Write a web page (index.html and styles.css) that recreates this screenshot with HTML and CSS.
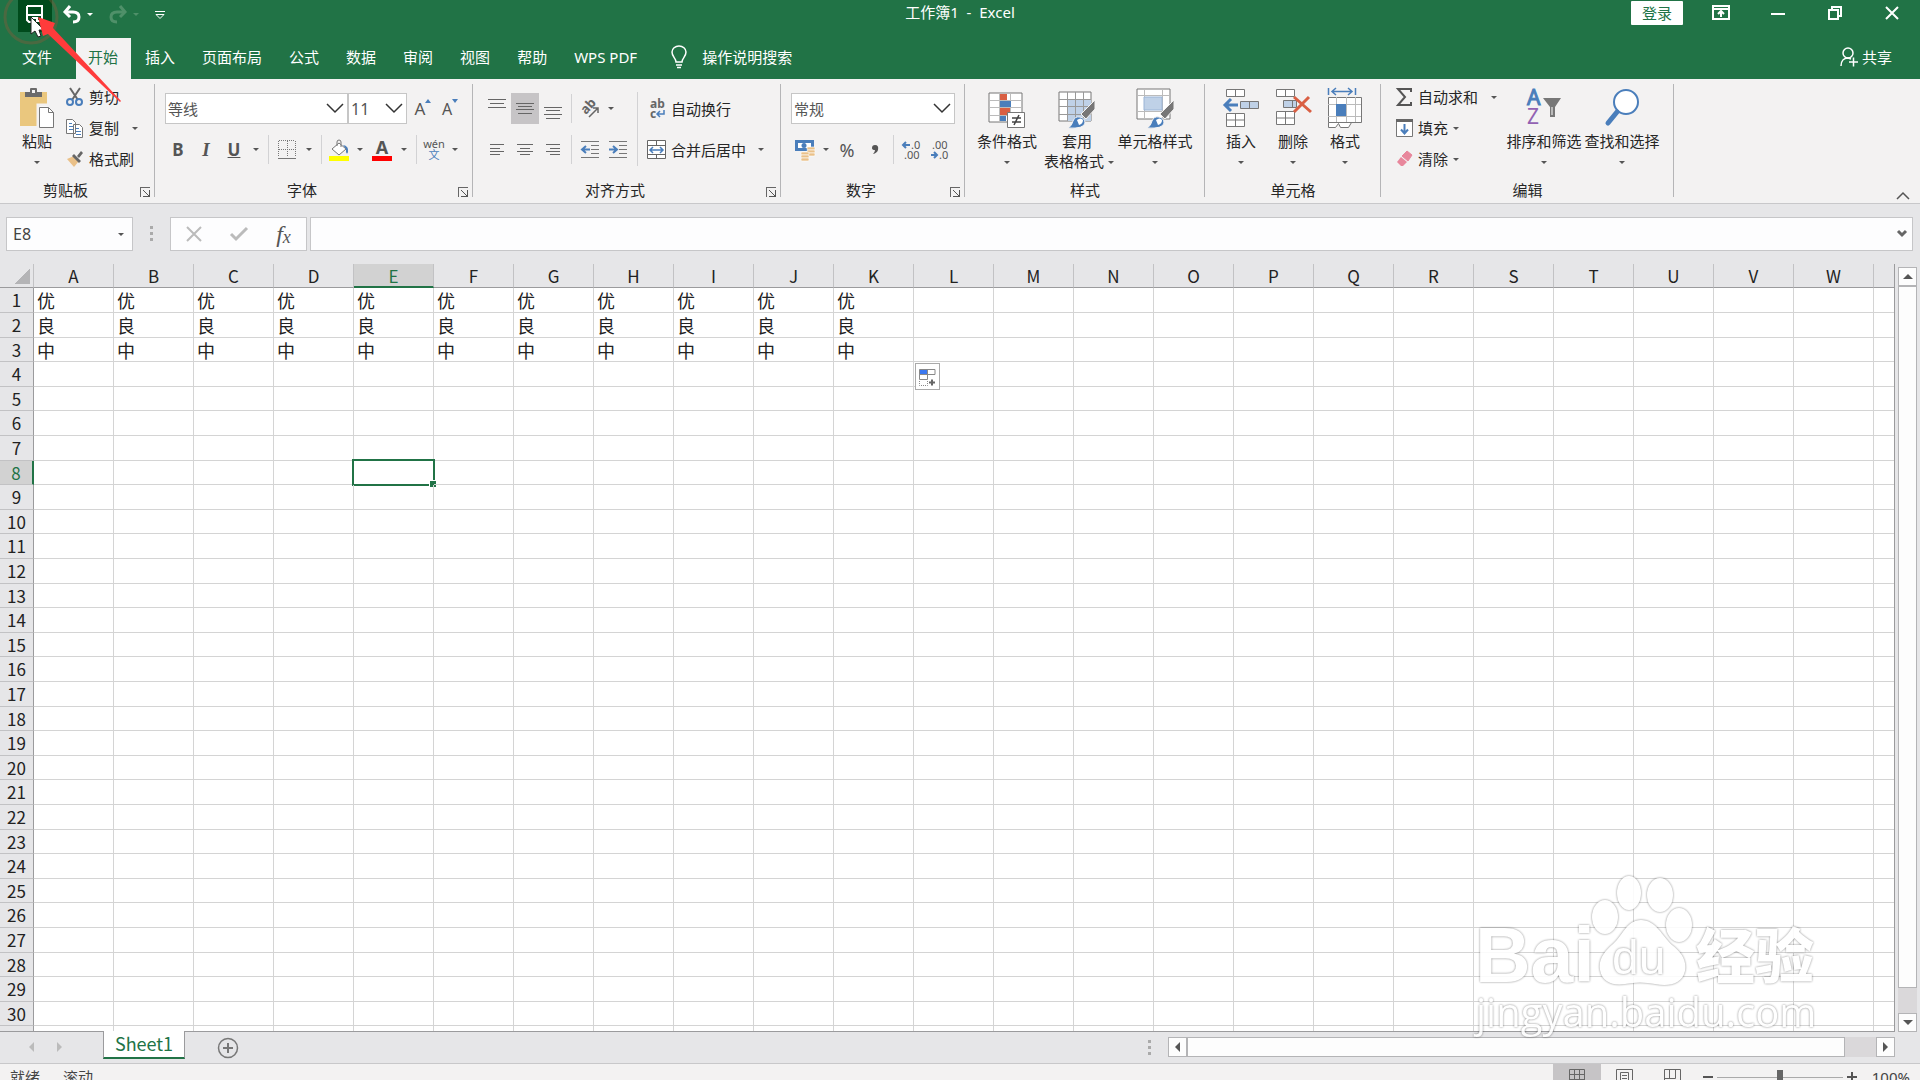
FILE: index.html
```html
<!DOCTYPE html>
<html lang="zh">
<head>
    <meta charset="UTF-8">
    <title>工作簿1 - Excel</title>
    <meta name="viewport" content="width=device-width, initial-scale=1.0">
    <link rel="stylesheet" href="styles.css">
</head>
<body>
<!-- 标题栏 -->
<header class="titlebar">
    <div class="quick">
        <button class="save" aria-label="保存">
            <svg width="18" height="20" fill="none" stroke="#fff" stroke-width="2"><path d="M1 2h15v15h-4M1 2v14l2 2h2M1 11h15"/><path d="M7 18v-4h4v4"/></svg>
        </button>
        <button class="undo" aria-label="撤销">
            <svg width="20" height="20" fill="none" stroke="#fff" stroke-width="3"><path d="M3 8h8c4 0 6 2 6 5s-2 5-6 5"/><path d="M8 2L3 8l5 5"/></svg>
        </button>
        <button class="drop light" aria-label="撤销列表"></button>
        <button class="redo" aria-label="恢复">
            <svg width="20" height="20" fill="none" stroke="#4f9069" stroke-width="3"><path d="M17 8H9c-4 0-6 2-6 5s2 5 6 5"/><path d="M12 2l5 6-5 5"/></svg>
        </button>
        <button class="drop faded" aria-label="恢复列表"></button>
        <button class="custom" aria-label="自定义快速访问工具栏">
            <svg width="12" height="10" fill="none" stroke="#fff"><path d="M1 1.500h10M2 4.500h8l-4 4z"/></svg>
        </button>
    </div>
    <h1>工作簿1&nbsp; -&nbsp; Excel</h1>
    <div class="window-tools">
        <button class="login">登录</button>
        <button aria-label="功能区显示选项"><svg width="18" height="16" fill="none" stroke="#fff" stroke-width="2"><path d="M1 1h16v13H1zM1 4h16M9 12V7M6 9l3-3 3 3" /></svg></button>
        <button aria-label="最小化"><svg width="14" height="14" stroke="#fff" stroke-width="2"><path d="M0 8h14"/></svg></button>
        <button aria-label="还原"><svg width="14" height="14" fill="none" stroke="#fff" stroke-width="2"><path d="M1 4h9v9H1zM4 4V1h9v9h-3"/></svg></button>
        <button aria-label="关闭"><svg width="14" height="14" stroke="#fff" stroke-width="2"><path d="M1 1l12 12M13 1L1 13"/></svg></button>
    </div>
</header>

<!-- 选项卡 -->
<nav class="tabs">
    <a href="#" class="file">文件</a>
    <a href="#" class="active">开始</a>
    <a href="#">插入</a>
    <a href="#">页面布局</a>
    <a href="#">公式</a>
    <a href="#">数据</a>
    <a href="#">审阅</a>
    <a href="#">视图</a>
    <a href="#">帮助</a>
    <a href="#">WPS PDF</a>
    <a href="#" class="tell">
        <svg width="16" height="24" fill="none" stroke="#fff" stroke-width="1.500"><path d="M5 17c0-4-4-5-4-10a7 6 0 0 1 14 0c0 5-4 6-4 10zM5 20h6M6 22.500h4"/></svg>
        操作说明搜索
    </a>
    <a href="#" class="share">
        <svg width="18" height="20" fill="none" stroke="#fff" stroke-width="1.500"><circle cx="8" cy="6" r="5"/><path d="M1 19c0-5 3-8 7-8l3 1M9 15h9M13.500 10.500v9"/></svg>
        共享
    </a>
</nav>

<!-- 功能区 -->
<section class="ribbon">
    <div class="group clipboard">
        <div class="body">
            <button class="big">
                <svg width="36" height="42"><path d="M1 5h27v34H1z" fill="#eac77e"/><path d="M6 10V5h5V2q0-1 1-1h5q1 0 1 1v3h5v5z" fill="#6b6b6b"/><path d="M13 3h3v3h-3z" fill="#f3f2f2"/><path d="M19 18h10l6 6v17H19z" fill="#fff" stroke="#f3f2f2" stroke-width="3"/><path d="M20.500 20.500h9l5 5v15h-14zM29.500 20.500v5h5" fill="#fff" stroke="#777"/></svg>
                <span>粘贴</span><i class="caret"></i>
            </button>
            <div class="stack">
                <button><svg width="18" height="20" fill="none" stroke-width="2"><path d="M4 1l8 12M14 1L6 13" stroke="#666"/><circle cx="4" cy="15" r="3" stroke="#4a7ebb"/><circle cx="13" cy="15" r="3" stroke="#4a7ebb"/></svg>剪切</button>
                <button><svg width="18" height="20" fill="#fff" stroke="#777"><path d="M.5 1.500h6l3 3v11h-9zM7.500 6.500h6l3 3v10h-9z"/><path d="M3 5.500h3M3 8.500h4M3 11.500h4M10 10.500h3M10 13.500h5M10 16.500h5" stroke="#4a7ebb"/></svg>复制<i class="caret gap"></i></button>
                <button><svg width="18" height="18"><path d="M1 9l7-3 5 5-5 6z" fill="#eac189"/><path d="M8 4l7 7-2 2-7-7zM11 6l4-5 2 2-4 5z" fill="#666"/></svg>格式刷</button>
            </div>
        </div>
        <div class="caption"><span>剪贴板</span><button class="launch" aria-label="剪贴板设置"></button></div>
    </div>

    <div class="group font">
        <div class="body rows">
            <div class="row">
                <select class="family" aria-label="字体"><option>等线</option></select>
                <select class="size" aria-label="字号"><option>11</option></select>
                <button class="ic grow">A<svg width="6" height="4"><path d="M0 4l3-4 3 4z" fill="#4a7ebb"/></svg></button>
                <button class="ic grow small">A<svg width="6" height="4"><path d="M0 0l3 4 3-4z" fill="#4a7ebb"/></svg></button>
            </div>
            <div class="row">
                <button class="ic bold">B</button>
                <button class="ic italic">I</button>
                <button class="ic under">U</button>
                <button class="drop" aria-label="下划线"></button>
                <hr>
                <button class="ic" aria-label="边框"><svg width="18" height="20" fill="none" stroke="#777"><path d="M1 .5h16M.5 1v16M17.500 1v16M9.500 1v16M1 9.500h16" stroke-dasharray="1 1"/><path d="M0 18.500h18"/></svg></button>
                <button class="drop" aria-label="边框列表"></button>
                <hr>
                <button class="ic slim" aria-label="填充颜色"><svg width="20" height="22"><path d="M10 4l7 6-7 6-7-6z" fill="#fff" stroke="#777"/><path d="M8 7V3q0-2 2-2t2 2v5" fill="none" stroke="#777"/><path d="M14 6q6 1 5 7-1 3-2 0v-3z" fill="#4a7ebb"/><path d="M0 17h20v5H0z" fill="#ff0"/></svg></button>
                <button class="drop" aria-label="填充颜色列表"></button>
                <button class="ic fontcolor">A</button>
                <button class="drop" aria-label="字体颜色列表"></button>
                <hr>
                <button class="ic slim pinyin"><span>wén</span><b>文</b></button>
                <button class="drop" aria-label="拼音列表"></button>
            </div>
        </div>
        <div class="caption"><span>字体</span><button class="launch" aria-label="字体设置"></button></div>
    </div>

    <div class="group align">
        <div class="body">
            <div class="rows">
                <div class="row">
                    <button class="ic" aria-label="顶端对齐"><svg width="18" height="22" stroke="#666"><path d="M0 1.500h18M2 5.500h14M0 9.500h18"/></svg></button>
                    <button class="ic on" aria-label="垂直居中"><svg width="18" height="22" stroke="#666"><path d="M0 5.500h18M2 8.500h14M0 11.500h18M2 15.500h14"/></svg></button>
                    <button class="ic" aria-label="底端对齐"><svg width="18" height="22" stroke="#666"><path d="M0 9.500h18M2 12.500h14M0 16.500h18M2 20.500h14"/></svg></button>
                    <hr>
                    <button class="ic" aria-label="方向"><svg width="20" height="20"><text transform="translate(6 16) rotate(-48)" font-size="13" font-weight="bold" fill="#666">ab</text><path d="M9 18l9-9M13 9h5v5" fill="none" stroke="#666" stroke-width="1.500"/></svg></button>
                    <button class="drop near" aria-label="方向列表"></button>
                </div>
                <div class="row">
                    <button class="ic" aria-label="左对齐"><svg width="14" height="12" stroke="#666"><path d="M0 .5h14M0 4.500h10M0 7.500h14M0 10.500h10"/></svg></button>
                    <button class="ic" aria-label="居中"><svg width="16" height="12" stroke="#666"><path d="M0 .5h16M3 4.500h10M0 7.500h16M3 10.500h10"/></svg></button>
                    <button class="ic" aria-label="右对齐"><svg width="14" height="12" stroke="#666"><path d="M0 .5h14M4 4.500h10M0 7.500h14M4 10.500h10"/></svg></button>
                    <hr>
                    <button class="ic" aria-label="减少缩进"><svg width="18" height="18" fill="none" stroke="#777"><path d="M0 .5h18M10 4.500h8M10 8.500h8M10 12.500h8M0 16.500h18"/><path d="M9 8.500H2M5 5L1 8.500 5 12" stroke="#4a7ebb" stroke-width="2"/></svg></button>
                    <button class="ic" aria-label="增加缩进"><svg width="18" height="18" fill="none" stroke="#777"><path d="M0 .5h18M10 4.500h8M10 8.500h8M10 12.500h8M0 16.500h18"/><path d="M0 8.500h7M4 5l4 3.500L4 12" stroke="#4a7ebb" stroke-width="2"/></svg></button>
                </div>
            </div>
            <hr class="tall">
            <div class="rows">
                <button class="row label"><svg width="20" height="20" font-size="12" font-weight="bold" fill="#666"><text x="3" y="9">ab</text><text x="3" y="19">c</text><path d="M17 11v4h-6M13 12l-3 3 3 3" fill="none" stroke="#4a7ebb" stroke-width="1.500"/></svg>自动换行</button>
                <button class="row label"><svg width="20" height="20" fill="#fff" stroke="#666"><path d="M.5.5h18v18H.5zM.5 5.500h18M.5 14.500h18M9.500.5v5M9.500 14.500v4"/><path d="M3 10h13M6 7l-3 3 3 3M13 7l3 3-3 3" fill="none" stroke="#4a7ebb" stroke-width="1.500"/></svg>合并后居中<i class="caret gap"></i></button>
            </div>
        </div>
        <div class="caption"><span>对齐方式</span><button class="launch" aria-label="对齐设置"></button></div>
    </div>

    <div class="group number">
        <div class="body rows">
            <div class="row">
                <select class="format" aria-label="数字格式"><option>常规</option></select>
            </div>
            <div class="row">
                <button class="ic" aria-label="会计数字格式"><svg width="20" height="22"><path d="M0 1h19v11H0z" fill="#4a7ebb"/><path d="M3 4h13v5H3z" fill="#fff"/><circle cx="9" cy="6.500" r="2.500" fill="#4a7ebb"/><g fill="#eac189" stroke="#fff" stroke-width=".6"><rect x="12" y="8" width="8" height="3" rx="1"/><rect x="12" y="11" width="8" height="3" rx="1"/><rect x="12" y="14" width="8" height="3" rx="1"/><rect x="6" y="13" width="8" height="3" rx="1"/><rect x="6" y="16" width="8" height="3" rx="1"/><rect x="6" y="19" width="8" height="3" rx="1"/></g></svg></button>
                <button class="drop near" aria-label="会计格式列表"></button>
                <button class="ic percent">%</button>
                <button class="ic" aria-label="千位分隔样式"><svg width="8" height="12"><path d="M4 1q4 0 3 5-1 3-5 4 2-2 2-4-3 0-3-2 0-3 3-3z" fill="#555"/></svg></button>
                <hr>
                <button class="ic" aria-label="增加小数位数"><svg width="18" height="20" font-size="11" fill="#555"><text x="8" y="9">.0</text><text x="1" y="19">.00</text><path d="M7 5H1M3 2L0 5l3 3" fill="none" stroke="#4a7ebb" stroke-width="2"/></svg></button>
                <button class="ic" aria-label="减少小数位数"><svg width="18" height="20" font-size="11" fill="#555"><text x="1" y="9">.00</text><text x="8" y="19">.0</text><path d="M0 15h6M3 12l3 3-3 3" fill="none" stroke="#4a7ebb" stroke-width="2"/></svg></button>
            </div>
        </div>
        <div class="caption"><span>数字</span><button class="launch" aria-label="数字设置"></button></div>
    </div>

    <div class="group styles">
        <div class="body">
            <button class="big">
                <svg width="38" height="42"><path d="M1 6h33v29H1z" fill="#fff" stroke="#777"/><path d="M1 13.500h33M1 20.500h33M1 28.500h33M11.500 6v29M22.500 6v29" stroke="#bbb"/><path d="M12 7h7v6h-7zM12 21h10v7H12z" fill="#d95f43"/><path d="M12 14h11v6H12zM12 29h6v5h-6z" fill="#4a7ebb"/><path d="M19.500 25.500h17v15h-17z" fill="#fff" stroke="#777"/><path d="M24 31h9M24 35h9M31 28l-5 10" stroke="#444" stroke-width="1.500"/></svg>
                <span>条件格式</span><i class="caret"></i>
            </button>
            <button class="big mid">
                <svg width="38" height="42"><path d="M1 5h32v29H1z" fill="#fff" stroke="#777"/><path d="M9 13h24v21H9z" fill="#bfd1e7"/><path d="M1 12.500h32M1 19.500h32M1 27.500h32M9.500 5v29M17.500 5v29M25.500 5v29" stroke="#999"/><path d="M37 13v9l-9 10-5-5z" fill="#777" stroke="#f3f2f2"/><path d="M10 41q4-2 5-7 2-5 7-4 5 1 5 6-1 6-17 5z" fill="#4a7ebb" stroke="#f3f2f2"/><path d="M19 33q4-3 6 0 0 4-4 5z" fill="#fff"/></svg>
                <span>套用</span><span class="second">表格格式<i class="caret"></i></span>
            </button>
            <button class="big wide">
                <svg width="38" height="42"><path d="M1 2h33v30H1z" fill="#fff" stroke="#777"/><path d="M1 8.500h33M1 24.500h33M8.500 2v30M26.500 2v30" stroke="#bbb"/><path d="M8 10h18v13H8z" fill="#bfd1e7" stroke="#9ab4d6"/><path d="M38 13v9l-9 10-5-5z" fill="#777" stroke="#f3f2f2"/><path d="M11 41q4-2 5-7 2-5 7-4 5 1 5 6-1 6-17 5z" fill="#4a7ebb" stroke="#f3f2f2"/><path d="M20 33q4-3 6 0 0 4-4 5z" fill="#fff"/></svg>
                <span>单元格样式</span><i class="caret"></i>
            </button>
        </div>
        <div class="caption"><span>样式</span></div>
    </div>

    <div class="group cells">
        <div class="body">
            <button class="big">
                <svg width="36" height="42" fill="#fff" stroke="#777"><path d="M3.500 2.500h18v7h-18zM12.500 2.500v7M3.500 26.500h18v13h-18zM12.500 26.500v13M3.500 33h18"/><path d="M17.500 14.500h18v7h-18zM26.500 14.500v7" fill="#bfd1e7"/><path d="M15 18H3M8 12l-6 6 6 6" fill="none" stroke="#4a7ebb" stroke-width="3"/></svg>
                <span>插入</span><i class="caret"></i>
            </button>
            <button class="big">
                <svg width="36" height="42" fill="#fff" stroke="#777"><path d="M1.500 2.500h18v7h-18zM10.500 2.500v7M1.500 24.500h18v13h-18zM10.500 24.500v13M1.500 31h18"/><path d="M8.500 13.500h13v7h-13zM17.500 13.500v7" fill="#bfd1e7"/><path d="M19 10l17 15M34 10L19 25" fill="none" stroke="#d95f43" stroke-width="3"/></svg>
                <span>删除</span><i class="caret"></i>
            </button>
            <button class="big">
                <svg width="36" height="42" fill="#fff" stroke="#777"><path d="M1.500 10.500h33v25h-33zM1.500 35.500v5h7l3-4 2 4h8l3-5"/><path d="M1 17.500h33M1 29.500h33M9.500 10v25M19.500 10v25M28.500 10v25" stroke="#bbb"/><path d="M9 17h10v12H9z" fill="#4a7ebb" stroke="none"/><path d="M1.500 1v7M28.500 1v7M5 4.500h20M9 1L5 4.500 9 8M21 1l4 3.500L21 8" fill="none" stroke="#4a7ebb" stroke-width="1.500"/></svg>
                <span>格式</span><i class="caret"></i>
            </button>
        </div>
        <div class="caption"><span>单元格</span></div>
    </div>

    <div class="group edit">
        <div class="body">
            <div class="stack">
                <button><svg width="17" height="20" fill="none" stroke="#555" stroke-width="2"><path d="M15 5V2H2l7 8-7 8h13v-3"/></svg>自动求和<i class="caret gap"></i></button>
                <button><svg width="17" height="20"><path d="M.5 1.500h16v17H.5z" fill="#fff" stroke="#777"/><path d="M0 1h17v3H0z" fill="#666"/><path d="M8.500 6v9M5 11.500l3.500 4 3.500-4" fill="none" stroke="#4a7ebb" stroke-width="2"/></svg>填充<i class="caret"></i></button>
                <button><svg width="17" height="20"><path d="M11 2l5 4-4 6-6-5z" fill="#e8879c" stroke="#e8879c"/><path d="M5 8l6 5-4 4H5l-4-4z" fill="#e8879c"/></svg>清除<i class="caret"></i></button>
            </div>
            <button class="big">
                <svg width="36" height="42"><text x="1" y="18" font-size="21" fill="#4a7ebb" stroke="#4a7ebb">A</text><text x="1" y="37" font-size="21" fill="#9262b3">Z</text><path d="M17 11h18l-6 9v10h-5V20z" fill="#777"/><path d="M26 20v8" stroke="#fff"/></svg>
                <span>排序和筛选</span><i class="caret"></i>
            </button>
            <button class="big">
                <svg width="36" height="42" fill="none" stroke="#4a7ebb"><circle cx="22" cy="15" r="12" fill="#fff" stroke-width="2"/><path d="M13 25L4 36" stroke-width="5" stroke-linecap="round"/></svg>
                <span>查找和选择</span><i class="caret"></i>
            </button>
        </div>
        <div class="caption"><span>编辑</span></div>
    </div>

    <button class="collapse" aria-label="折叠功能区"><svg width="14" height="9" fill="none" stroke="#555" stroke-width="1.500"><path d="M1 8l6-6 6 6"/></svg></button>
</section>

<!-- 编辑栏 -->
<section class="formula">
    <div class="namebox"><input type="text" value="E8" aria-label="名称框"><button class="drop" aria-label="名称列表"></button></div>
    <span class="grip"></span>
    <div class="fx">
        <button aria-label="取消"><svg width="16" height="16" stroke="#bbb" stroke-width="2"><path d="M1 1l14 14M15 1L1 15"/></svg></button>
        <button aria-label="输入"><svg width="18" height="16" fill="none" stroke="#bbb" stroke-width="3"><path d="M1 8l5 5L17 2"/></svg></button>
        <button class="fn"><i>f</i><i class="sub">x</i></button>
    </div>
    <div class="inputbar"><input type="text" aria-label="编辑栏"><button aria-label="展开编辑栏"><svg width="10" height="8" fill="none" stroke="#666" stroke-width="3"><path d="M1 1l4 4 4-4"/></svg></button></div>
</section>

<!-- 表格 -->
<main class="sheet">
    <div class="viewport">
        <table id="grid"></table>
    </div>
    <div class="vscroll">
        <button aria-label="向上"><i class="tri up"></i></button>
        <div class="thumb"></div>
        <button aria-label="向下"><i class="tri down"></i></button>
    </div>
    <svg class="watermark" width="350" height="170" aria-label="Baidu 经验">
        <text class="latin" x="0" y="111">Bai</text>
        <g>
            <ellipse cx="130" cy="46" rx="13" ry="17"/>
            <ellipse cx="154" cy="22" rx="12" ry="17"/>
            <ellipse cx="185" cy="24" rx="13" ry="17"/>
            <ellipse cx="204" cy="54" rx="13" ry="17"/>
            <path d="M166 49c-14 0-18 15-28 24-8 7-15 15-13 26 2 12 13 16 25 14 10-2 20-2 30 0 14 3 27 0 30-13 2-11-4-19-13-26-10-9-16-25-31-25z"/>
        </g>
        <text class="du" x="137" y="103">du</text>
        <text class="cn" x="221" y="107">经验</text>
        <text class="url" x="1" y="156">jingyan.baidu.com</text>
    </svg>
</main>

<!-- 工作表标签 -->
<section class="sheets">
    <button class="step" aria-label="上一张"><i class="tri left"></i></button>
    <button class="step" aria-label="下一张"><i class="tri right"></i></button>
    <button class="sheet-tab">Sheet1</button>
    <button class="add" aria-label="新工作表"><svg width="22" height="22" fill="none" stroke="#777"><circle cx="11" cy="11" r="9.500" stroke-width="1.500"/><path d="M6 11h10M11 6v10" stroke-width="2"/></svg></button>
    <span class="grip"></span>
    <div class="hscroll">
        <button aria-label="向左"><i class="tri left"></i></button>
        <div class="thumb"></div>
        <button aria-label="向右"><i class="tri right"></i></button>
    </div>
</section>

<!-- 状态栏 -->
<footer class="status">
    <span>就绪</span><span>滚动</span>
    <div class="views">
        <button class="on" aria-label="普通"><svg width="16" height="16" fill="none" stroke="#666"><path d="M.5.5h15v15H.5zM.5 5.500h15M.5 10.500h15M5.500.5v15M10.500.5v15"/></svg></button>
        <button aria-label="页面布局"><svg width="17" height="16" fill="none" stroke="#666"><path d="M.5.5h16v15H.5zM4.500 3.500h8v12h-8zM6 6.500h5M6 9.500h5M6 12.500h5"/></svg></button>
        <button aria-label="分页预览"><svg width="17" height="16" fill="none" stroke="#666"><path d="M.5.500h16v15M.5.5v15M5.500.5v9M11.500.5v9M.5 9.500h11"/></svg></button>
    </div>
    <button class="zoom-btn" aria-label="缩小"><svg width="10" height="12" stroke="#555" stroke-width="2"><path d="M0 6h10"/></svg></button>
    <input type="range" min="0" max="200" value="100" aria-label="缩放">
    <button class="zoom-btn" aria-label="放大"><svg width="10" height="12" stroke="#555" stroke-width="2"><path d="M0 6h10M5 1v10"/></svg></button>
    <span class="percent">100%</span>
</footer>

<!-- 鼠标与指示箭头 -->
<svg class="pointer" width="130" height="110">
    <circle cx="31" cy="17" r="26" fill="none" stroke="#8a5a3a" stroke-width="3" opacity=".4"/>
    <path d="M31 17v17l4-3 3 6 3-1-2-6h5z" fill="#fff" stroke="#222"/>
    <path d="M38 17l17 6-2 5 68 73-1 1-72-68-5 2z" fill="#ff3b3b"/>
</svg>

<script>
    const grid = document.getElementById('grid');
    const cols = 'ABCDEFGHIJKLMNOPQRSTUVW'.split('');
    const values = ['优', '良', '中'];
    const filled = 11;
    const selected = {col: 'E', row: 8};

    const paste = `<button class="fill-options" aria-label="自动填充选项">
        <svg width="19" height="19" fill="#fff" stroke="#888"><path d="M9 2.500h8v5H9zM1.500 7.500h8v5h-8z"/><path d="M1.500 14v4.500h8V14" stroke-dasharray="1 1"/><path d="M1.500 2.500h8v5h-8z" fill="#3b78f0"/><path d="M11 15.500h6M14 12.500v6" stroke="#666" stroke-width="2"/></svg>
    </button>`;

    let html = '<thead><tr><th class="corner"></th>';
    html += cols.map(c => `<th class="${c === selected.col ? 'on' : ''}">${c}</th>`).join('');
    html += '<th class="rest"></th></tr></thead><tbody>';
    for (let r = 1; r <= 31; r++) {
        html += `<tr><th class="${r === selected.row ? 'on' : ''}">${r}</th>`;
        cols.forEach((c, i) => {
            let text = r <= values.length && i < filled ? values[r - 1] : '';
            if (c === 'L' && r === 4) text = paste;
            html += `<td class="${c === selected.col && r === selected.row ? 'selected' : ''}">${text}</td>`;
        });
        html += '<td></td></tr>';
    }
    grid.innerHTML = html + '</tbody>';
</script>
</body>
</html>
```
FILE: styles.css
```css
* {
    box-sizing: border-box;
}

body {
    margin: 0;
    height: 100vh;
    display: flex;
    flex-direction: column;
    overflow: hidden;
    background: #e6e6e8;
    color: #262626;
    font: 15px/20px "Noto Sans", "Noto Sans CJK SC", sans-serif;
}

button, input, select {
    font: inherit;
    color: inherit;
    border: 0;
    padding: 0;
    margin: 0;
    background: none;
    border-radius: 0;
}

button {
    display: flex;
    align-items: center;
    justify-content: center;
}

input:focus {
    outline: none;
}

svg {
    flex: none;
    overflow: visible;
}

a {
    color: inherit;
    text-decoration: none;
}

/* 标题栏 */
.titlebar {
    height: 38px;
    background: #217346;
    color: white;
    display: grid;
    grid-template-columns: 1fr auto 1fr;
    align-items: start;
}

.titlebar h1 {
    margin: 0;
    font-size: 15px;
    font-weight: normal;
    line-height: 24px;
}

.quick {
    display: flex;
    align-items: center;
    padding-left: 18px;
}

.quick button {
    height: 32px;
}

.quick .save {
    width: 34px;
    background: #004b1c;
    padding-bottom: 4px;
}

.quick .undo,
.quick .redo {
    width: 20px;
    margin-left: 10px;
    padding-bottom: 4px;
}

.quick .custom {
    margin-left: 10px;
    padding-bottom: 2px;
}

.drop {
    width: 16px;
    height: 31px;
}

.drop.near {
    width: 14px;
}

.quick .drop {
    padding-bottom: 4px;
}

.drop::before,
.caret {
    content: "";
    flex: none;
    border: 3px solid transparent;
    border-top-color: #555;
    border-bottom: 0;
}

.light::before {
    border-top-color: white;
}

.faded::before {
    border-top-color: #4f9069;
}

.window-tools {
    display: flex;
    justify-content: flex-end;
    align-items: center;
}

.window-tools button {
    width: 57px;
    height: 26px;
    padding-bottom: 1px;
}

.window-tools .login {
    width: 52px;
    height: 24px;
    margin-right: 9px;
    background: white;
    color: #217346;
    border-radius: 1px;
}

/* 选项卡 */
.tabs {
    height: 41px;
    background: #217346;
    color: white;
    display: flex;
}

.tabs a {
    display: flex;
    align-items: center;
    padding: 0 13px 4px 14px;
    white-space: nowrap;
}

.tabs .file {
    padding-left: 22px;
    padding-right: 22px;
}

.tabs .active {
    margin-left: 2px;
    padding-left: 12px;
    background: #f3f2f2;
    color: #217346;
}

.tabs .tell {
    gap: 15px;
    padding-left: 21px;
}

.tabs .share {
    margin-left: auto;
    gap: 4px;
    padding-right: 28px;
}

/* 功能区 */
.ribbon {
    height: 125px;
    background: #f3f2f2;
    border-bottom: 1px solid #c8c8ca;
    display: flex;
    padding-top: 3px;
}

.group {
    display: flex;
    flex-direction: column;
    flex: none;
    background: linear-gradient(#b5b5b7, #b5b5b7) no-repeat right 2px / 1px 113px;
}

.clipboard {
    width: 155px;
}

.font {
    width: 318px;
}

.align {
    width: 308px;
}

.number {
    width: 184px;
}

.styles {
    width: 240px;
}

.cells {
    width: 176px;
}

.edit {
    width: 293px;
}

.body {
    display: flex;
    flex: 1;
    padding-left: 10px;
}

.clipboard .body,
.font .body,
.styles .body {
    padding-left: 8px;
}

.edit .body {
    padding-left: 15px;
}

.rows {
    display: flex;
    flex-direction: column;
    gap: 10px;
    padding-top: 11px;
}

.row {
    display: flex;
    align-items: center;
    height: 31px;
}

.caption {
    height: 26px;
    display: flex;
    align-items: center;
}

.caption span {
    flex: 1;
    text-align: center;
}

.launch {
    position: relative;
    width: 10px;
    height: 10px;
    margin: 3px 5px 0 9px;
    border-top: 1px solid #666;
    border-left: 1px solid #666;
}

.launch::after {
    content: "";
    position: absolute;
    right: 0;
    bottom: 0;
    width: 6px;
    height: 6px;
    border-right: 1px solid #555;
    border-bottom: 1px solid #555;
    background: linear-gradient(to top right, transparent 42%, #555 42%, #555 58%, transparent 58%);
}

hr {
    width: 1px;
    height: 29px;
    margin: 0 4px;
    border: 0;
    background: #d2d2d4;
}

hr.tall {
    height: 74px;
    margin: 10px 9px 0 5px;
}

.big {
    width: 78px;
    flex-direction: column;
    justify-content: flex-start;
    padding-top: 5px;
    white-space: nowrap;
}

.big span {
    margin-top: 2px;
}

.big .caret {
    margin-top: 10px;
}

.big .second {
    display: flex;
    align-items: center;
    margin: 0 0 0 4px;
}

.second .caret {
    margin: 2px 0 0 4px;
}

.clipboard .big {
    width: 58px;
}

.styles .big {
    width: 68px;
}

.styles .mid {
    width: 72px;
}

.styles .wide {
    width: 84px;
}

.cells .big {
    width: 52px;
}

.stack {
    display: flex;
    flex-direction: column;
    align-items: flex-start;
}

.edit .stack {
    width: 109px;
}

.stack button {
    height: 31px;
    gap: 5px;
    padding-bottom: 1px;
    white-space: nowrap;
}

.stack .caret.gap,
.label .caret.gap {
    margin-left: 8px;
}

.ic {
    width: 28px;
    height: 31px;
    flex: none;
    color: #555;
}

.ic.slim {
    width: 26px;
}

.ic.on {
    background: #c6c4c6;
}

.label {
    gap: 4px;
    justify-content: flex-start;
}

select {
    appearance: none;
    height: 31px;
    padding-left: 2px;
    border: 1px solid #c6c6c6;
    background: white url("data:image/svg+xml,%3Csvg xmlns='http://www.w3.org/2000/svg' width='18' height='11' fill='none' stroke='%23333' stroke-width='1.500'%3E%3Cpath d='M1 1l8 8 8-8'/%3E%3C/svg%3E") no-repeat right 3px center;
    color: #555;
}

.family {
    width: 183px;
    margin-left: 2px;
}

.size {
    width: 59px;
    margin-right: 2px;
    font-size: 16px;
}

.format {
    width: 164px;
}

.grow {
    font-size: 17px;
}

.grow svg {
    margin-bottom: 16px;
}

.grow.small {
    width: 26px;
    font-size: 16px;
}

.bold,
.italic,
.under {
    font-size: 17px;
    font-weight: bold;
}

.bold {
    margin-left: 1px;
}

.italic {
    font-family: "Liberation Serif", serif;
    font-size: 19px;
    font-style: italic;
}

.under {
    text-decoration: underline;
}

.fontcolor {
    width: 20px;
    height: 22px;
    margin: 0 4px;
    border-bottom: 5px solid red;
    font-size: 18px;
    font-weight: bold;
}

.pinyin {
    flex-direction: column;
    font-size: 11px;
    line-height: 10px;
}

.pinyin b {
    color: #4a7ebb;
    line-height: 12px;
    font-weight: normal;
}

.ic.percent {
    font-size: 18px;
}

.collapse {
    margin: auto 10px 3px auto;
}

/* 编辑栏 */
.formula {
    height: 60px;
    padding: 13px 7px 0 6px;
    display: flex;
    align-items: flex-start;
}

.namebox,
.fx,
.inputbar {
    height: 34px;
    display: flex;
    align-items: center;
    background: #fdfdfe;
    border: 1px solid #c6c6c8;
}

.namebox {
    width: 127px;
}

.namebox input {
    width: 100px;
    flex: 1;
    padding-left: 6px;
    color: #444;
    font-size: 16px;
}

.namebox .drop {
    width: 22px;
}

.grip {
    width: 3px;
    height: 15px;
    margin: 9px 17px;
    background: repeating-linear-gradient(#aaa 0 3px, transparent 3px 6px);
}

.fx {
    width: 137px;
    margin-right: 3px;
}

.fx button {
    flex: 1;
}

.fn {
    font: italic 24px/28px "Liberation Serif", serif;
    color: #555;
}

.fn .sub {
    font-size: 18px;
    padding-top: 6px;
}

.inputbar {
    flex: 1;
}

.inputbar input {
    flex: 1;
}

.inputbar button {
    width: 20px;
}

/* 表格 */
.sheet {
    position: relative;
    flex: 1;
    min-height: 0;
    display: flex;
}

.viewport {
    flex: 1;
    overflow: hidden;
    border-right: 1px solid #9b9b9d;
    border-bottom: 1px solid #9b9b9d;
}

table {
    width: 100%;
    table-layout: fixed;
    border-spacing: 0;
    background: white;
    font: 18px/22px "Noto Sans CJK SC", sans-serif;
    color: #222;
}

tbody tr {
    height: 25px;
}

thead tr,
tbody tr:nth-child(5n+3),
tbody tr:nth-child(5n) {
    height: 24px;
}

th, td {
    width: 80px;
    padding: 0;
    border-right: 1px solid #d4d4d4;
    border-bottom: 1px solid #d4d4d4;
    white-space: nowrap;
}

td {
    position: relative;
    padding-left: 3px;
}

th {
    background: #e6e6e8;
    font-size: 17px;
    font-weight: normal;
    border-color: #c2c2c4;
}

thead th {
    border-bottom-color: #9b9b9d;
}

tbody th {
    border-right-color: #9b9b9d;
}

.corner {
    width: 34px;
    background: #e6e6e8 linear-gradient(to bottom right, transparent 50%, #b4b4b6 50%) no-repeat 15px 5px / 15px 15px;
}

tr > :last-child {
    width: auto;
    border-right: 0;
}

thead .on {
    background: #d2d2d2;
    color: #217346;
    line-height: 21px;
    border-bottom: 2px solid #217346;
}

tbody .on {
    background: #d2d2d2;
    color: #217346;
    border-right: 2px solid #217346;
}

.selected::before {
    content: "";
    position: absolute;
    inset: -2px;
    border: 2px solid #217346;
}

.selected::after {
    content: "";
    position: absolute;
    right: -3px;
    bottom: -3px;
    width: 6px;
    height: 6px;
    background: #217346;
    border: solid white;
    border-width: 1px 0 0 1px;
}

.fill-options {
    position: absolute;
    left: 1px;
    top: 1px;
    width: 25px;
    height: 27px;
    background: white;
    border: 1px solid #aaa;
    z-index: 1;
}

/* 水印 */
.watermark {
    position: absolute;
    right: 95px;
    bottom: -9px;
    fill: white;
    opacity: .9;
    pointer-events: none;
}

.watermark > * {
    filter: drop-shadow(0 0 1px rgba(0, 0, 0, .5));
}

.latin {
    font: bold 77px "Liberation Sans", sans-serif;
}

.du {
    font: 48px "Liberation Sans", sans-serif;
}

.cn {
    font: 900 59px "Noto Sans CJK SC", sans-serif;
}

.url {
    font: 40px "Open Sans", sans-serif;
}

/* 滚动条 */
.vscroll,
.hscroll {
    display: flex;
    background: #dad8da;
}

.vscroll {
    flex-direction: column;
    width: 19px;
    margin: 3px 3px 0 3px;
}

.thumb {
    flex: 1;
    background: #fdfdfd;
    border: 1px solid #b4b4b6;
}

.vscroll .thumb {
    margin-bottom: 25px;
}

.vscroll button,
.hscroll button {
    width: 19px;
    height: 19px;
    background: #fdfdfd;
    border: 1px solid #b4b4b6;
}

.tri {
    border: 5px solid transparent;
}

.up {
    border-bottom-color: #555;
    border-top: 0;
}

.down {
    border-top-color: #555;
    border-bottom: 0;
}

.left {
    border-right-color: #555;
    border-left: 0;
}

.right {
    border-left-color: #555;
    border-right: 0;
}

.step .left {
    border-right-color: #bbb;
}

.step .right {
    border-left-color: #bbb;
}

/* 工作表标签 */
.sheets {
    height: 31px;
    padding: 0 25px 0 17px;
    display: flex;
    align-items: flex-start;
}

.step {
    width: 28px;
    height: 30px;
}

.sheet-tab {
    width: 82px;
    height: 28px;
    margin: -1px 32px 0 30px;
    padding-bottom: 2px;
    background: white;
    border: 1px solid #9b9b9d;
    border-top: 0;
    border-bottom: 2px solid #217346;
    color: #217346;
    font: 18px/22px "Noto Sans CJK SC", sans-serif;
    position: relative;
}

.add {
    height: 31px;
}

.sheets .grip {
    margin: 8px 17px 0 auto;
}

.hscroll {
    width: 727px;
    height: 20px;
    margin-top: 5px;
}

.hscroll .thumb {
    margin-right: 31px;
}

.hscroll button {
    height: 20px;
}

/* 状态栏 */
.status {
    height: 17px;
    overflow: hidden;
    background: #f3f2f2;
    border-top: 1px solid #c8c8ca;
    display: flex;
    align-items: flex-start;
    padding: 0 10px;
    color: #444;
}

.status span {
    margin: 3px 23px 0 0;
}

.views {
    display: flex;
    margin-left: auto;
    margin-right: 6px;
}

.views button {
    width: 48px;
    height: 26px;
}

.views .on {
    background: #c6c4c6;
}

.zoom-btn {
    margin-top: 7px;
}

.status input {
    appearance: none;
    width: 126px;
    height: 1px;
    margin: 13px 4px 0;
    background: #aaa;
}

.status input::-webkit-slider-thumb {
    appearance: none;
    width: 6px;
    height: 16px;
    background: #666;
}

.status .percent {
    margin: 3px 0 0 15px;
}

/* 指示箭头 */
.pointer {
    position: absolute;
    left: 0;
    top: 0;
    pointer-events: none;
}
```
